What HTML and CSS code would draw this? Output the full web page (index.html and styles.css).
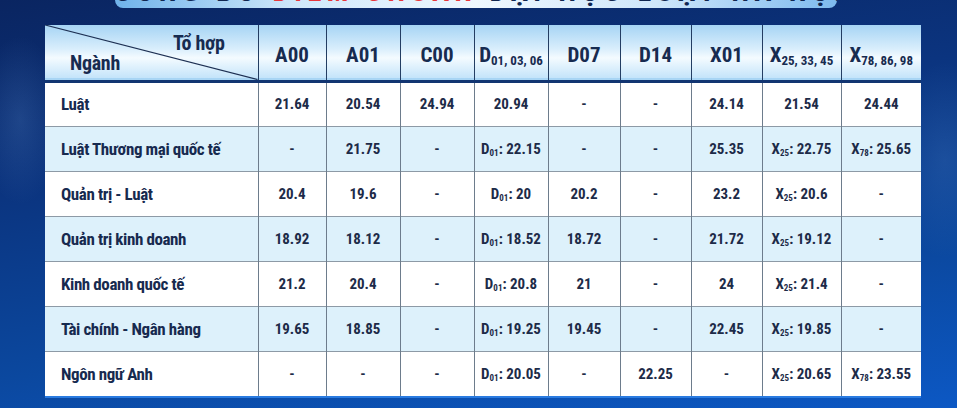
FILE: index.html
```html
<!DOCTYPE html>
<html lang="vi">
<head>
<meta charset="utf-8">
<title>Điểm chuẩn</title>
<link rel="stylesheet" href="styles.css">
</head>
<body>
<div class="page">
  <div class="banner"><div class="banner-text">CÔNG BỐ <span class="red">ĐIỂM CHUẨN</span> ĐẠI HỌC LUẬT HÀ NỘI 2025</div></div>
  <table class="scores">
    <colgroup>
      <col class="c-name"><col class="c68"><col class="c74"><col class="c74"><col class="c74"><col class="c72"><col class="c71"><col class="c71"><col class="c79"><col class="c80">
    </colgroup>
    <thead>
      <tr>
        <th class="corner">
          <svg class="diag" viewBox="0 0 100 100" preserveAspectRatio="none"><line x1="0" y1="0" x2="100" y2="100" stroke="#1d2f52" stroke-width="1.2" vector-effect="non-scaling-stroke"/></svg>
          <span class="th-top">Tổ hợp</span>
          <span class="th-bot">Ngành</span>
        </th>
        <th>A00</th><th>A01</th><th>C00</th>
        <th>D<sub>01, 03, 06</sub></th>
        <th>D07</th><th>D14</th><th>X01</th>
        <th>X<sub>25, 33, 45</sub></th>
        <th>X<sub>78, 86, 98</sub></th>
      </tr>
    </thead>
    <tbody>
      <tr><td class="name">Luật</td><td>21.64</td><td>20.54</td><td>24.94</td><td>20.94</td><td>-</td><td>-</td><td>24.14</td><td>21.54</td><td>24.44</td></tr>
      <tr class="alt"><td class="name">Luật Thương mại quốc tế</td><td>-</td><td>21.75</td><td>-</td><td>D<sub>01</sub>: 22.15</td><td>-</td><td>-</td><td>25.35</td><td>X<sub>25</sub>: 22.75</td><td>X<sub>78</sub>: 25.65</td></tr>
      <tr><td class="name">Quản trị - Luật</td><td>20.4</td><td>19.6</td><td>-</td><td>D<sub>01</sub>: 20</td><td>20.2</td><td>-</td><td>23.2</td><td>X<sub>25</sub>: 20.6</td><td>-</td></tr>
      <tr class="alt"><td class="name">Quản trị kinh doanh</td><td>18.92</td><td>18.12</td><td>-</td><td>D<sub>01</sub>: 18.52</td><td>18.72</td><td>-</td><td>21.72</td><td>X<sub>25</sub>: 19.12</td><td>-</td></tr>
      <tr><td class="name">Kinh doanh quốc tế</td><td>21.2</td><td>20.4</td><td>-</td><td>D<sub>01</sub>: 20.8</td><td>21</td><td>-</td><td>24</td><td>X<sub>25</sub>: 21.4</td><td>-</td></tr>
      <tr class="alt"><td class="name">Tài chính - Ngân hàng</td><td>19.65</td><td>18.85</td><td>-</td><td>D<sub>01</sub>: 19.25</td><td>19.45</td><td>-</td><td>22.45</td><td>X<sub>25</sub>: 19.85</td><td>-</td></tr>
      <tr><td class="name">Ngôn ngữ Anh</td><td>-</td><td>-</td><td>-</td><td>D<sub>01</sub>: 20.05</td><td>-</td><td>22.25</td><td>-</td><td>X<sub>25</sub>: 20.65</td><td>X<sub>78</sub>: 23.55</td></tr>
    </tbody>
  </table>
</div>
</body>
</html>
```

FILE: styles.css
```css
html, body {
  margin: 0;
  padding: 0;
}
body {
  width: 957px;
  height: 408px;
  overflow: hidden;
  background:
    radial-gradient(ellipse 60px 120px at 20px 120px, rgba(120,170,230,0.18), transparent 70%),
    radial-gradient(ellipse 80px 140px at 945px 160px, rgba(120,170,230,0.15), transparent 70%),
    linear-gradient(172deg, #0a2561 0%, #0b347f 35%, #0b489f 70%, #0c58c4 100%);
  font-family: Roboto, "DejaVu Sans Condensed", sans-serif;
  font-stretch: 75%;
  color: #1b2a4a;
}
.page {
  display: flex;
  flex-direction: column;
}
.banner {
  margin-left: 115px;
  width: 722px;
  height: 8px;
  overflow: hidden;
  border-radius: 0 0 22px 22px;
  background: linear-gradient(90deg, #6fb2ea 0%, #cfe8fb 25%, #eef7ff 50%, #cfe7fb 75%, #7dbaee 100%);
}
.banner-text {
  margin-top: -19px;
  text-align: center;
  font-family: Roboto, sans-serif;
  font-stretch: 100%;
  font-weight: 900;
  font-size: 24px;
  line-height: 24px;
  letter-spacing: 6px;
  color: #0f2550;
  white-space: nowrap;
}
.banner-text .red {
  color: #e8363b;
}
.scores {
  margin-top: 17px;
  margin-left: 45px;
  width: 876px;
  border-collapse: collapse;
  table-layout: fixed;
  box-shadow: 0 2px 0 #2a7be0;
}
.c-name { width: 213px; }
.c68 { width: 68px; }
.c74 { width: 74px; }
.c72 { width: 72px; }
.c71 { width: 71px; }
.c79 { width: 79px; }
.c80 { width: 80px; }

thead tr {
  height: 56px;
  background: linear-gradient(180deg, #a6d4f4 0%, #d9eefc 45%, #f4fbff 62%, #c4e4fa 100%);
  border-bottom: 3px solid #123571;
}
th {
  font-weight: 700;
  font-size: 21px;
  color: #172b50;
  text-align: center;
  vertical-align: middle;
  padding: 5px 0 0;
  border-left: 1px solid #233d62;
  white-space: nowrap;
}
th:first-child { border-left: none; }
th sub {
  font-size: 13px;
  vertical-align: baseline;
  position: relative;
  top: 3px;
}
th.corner {
  position: relative;
  text-align: left;
}
.diag {
  position: absolute;
  left: 0;
  top: 0;
  width: 100%;
  height: 100%;
}
.th-top {
  position: absolute;
  right: 33px;
  top: 6px;
  font-size: 20px;
  letter-spacing: -0.3px;
}
.th-bot {
  position: absolute;
  left: 25px;
  bottom: 5px;
  font-size: 20px;
  letter-spacing: -0.3px;
}
tbody tr {
  height: 45px;
  background: #ffffff;
}
tbody tr.alt {
  background: #ddf1fb;
}
tbody tr + tr td {
  border-top: 1px solid #8d9aa6;
}
td {
  padding: 0;
  text-align: center;
  vertical-align: middle;
  font-weight: 700;
  font-size: 15px;
  color: #1d2b48;
  border-left: 1px solid #6d7c8c;
  white-space: nowrap;
}
td.name {
  border-left: none;
  text-align: left;
  padding-left: 16px;
  font-size: 17px;
  letter-spacing: -0.4px;
  color: #172a4f;
}
td sub {
  font-size: 9px;
  vertical-align: baseline;
  position: relative;
  top: 2px;
}
```
